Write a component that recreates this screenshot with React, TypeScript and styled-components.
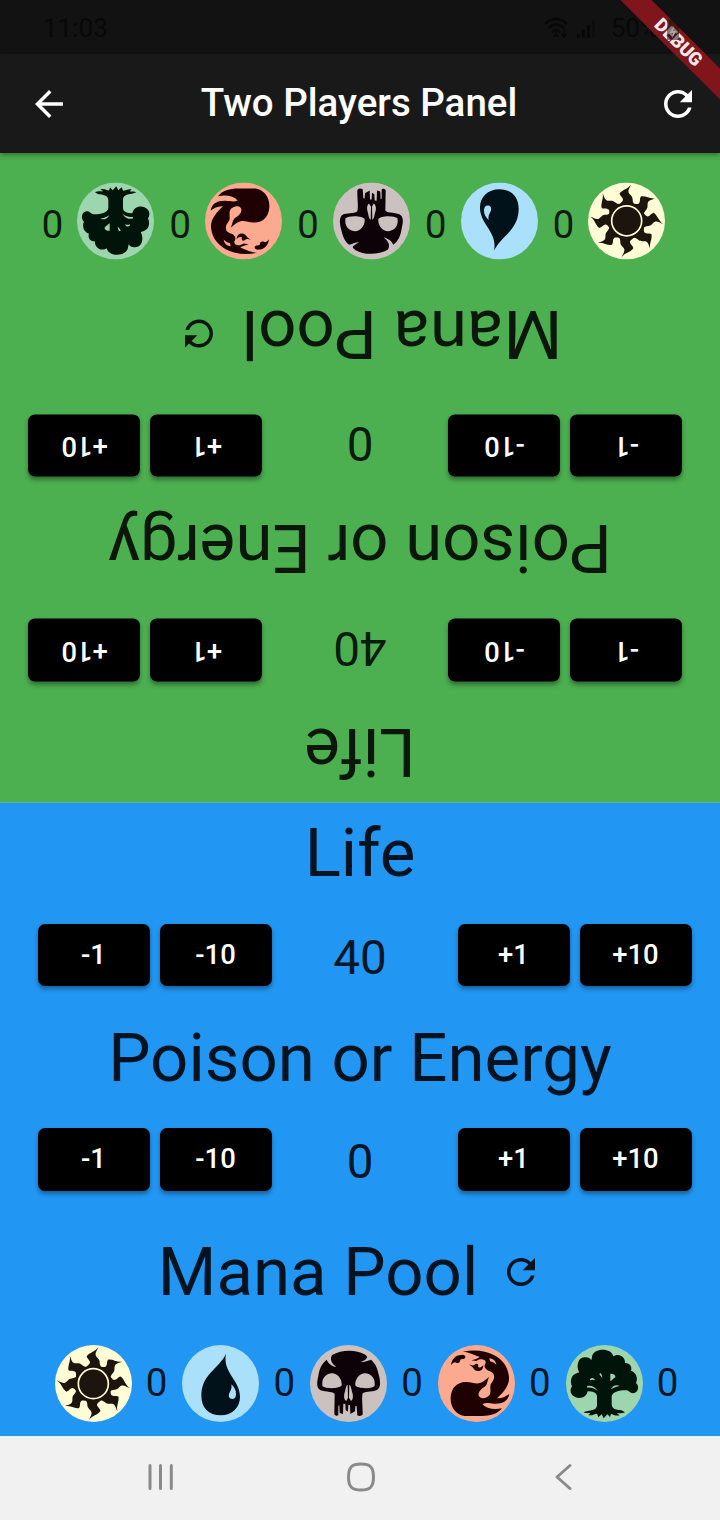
import React from 'react';
import styled, { createGlobalStyle } from 'styled-components';

const GlobalStyle = createGlobalStyle`
  html, body { margin: 0; padding: 0; }
  body { background: #f1f1f1; font-family: Roboto, sans-serif; }
  *, *::before, *::after { box-sizing: border-box; }
`;

const Screen = styled.main`
  position: relative;
  display: flex;
  flex-direction: column;
  width: 720px;
  height: 1520px;
  overflow: hidden;
  background: #62c0c8;
`;

const StatusBar = styled.div`
  display: flex;
  align-items: center;
  justify-content: space-between;
  height: 54px;
  padding: 2px 32px 0 43px;
  background: #121212;
  color: #080808;
  font-size: 26px;
  line-height: 30px;
`;

const StatusIcons = styled.div`
  display: flex;
  align-items: center;
  gap: 7px;
`;

const Charge = styled.span`
  margin-left: 5px;
`;

const AppBar = styled.header`
  position: relative;
  z-index: 1;
  display: flex;
  align-items: center;
  justify-content: space-between;
  height: 99px;
  padding: 1px 21px 0 28px;
  background: #191919;
  color: #fff;
  box-shadow: 0 2px 5px rgba(0, 0, 0, 0.35);
`;

const Title = styled.h1`
  margin: 0;
  padding: 0 9px 2px 0;
  font-size: 38.5px;
  font-weight: 500;
  line-height: 46px;
`;

const IconButton = styled.button`
  display: flex;
  padding: 0;
  border: 0;
  background: none;
  color: inherit;
`;

const Banner = styled.div`
  position: absolute;
  z-index: 2;
  top: 31px;
  left: 598px;
  width: 160px;
  height: 22px;
  padding-left: 1px;
  transform: rotate(45deg);
  background: #80161b;
  color: #f3e9e9;
  font-size: 18.5px;
  font-weight: 900;
  line-height: 22px;
  text-align: center;
`;

const BatteryMark = styled.svg`
  position: absolute;
  z-index: 3;
  top: 17px;
  left: 666px;
`;

const Panel = styled.section<{ $color: string; $flipped?: boolean }>`
  display: flex;
  flex-direction: column;
  height: ${(p) => (p.$flipped ? '649.5px' : '633.5px')};
  padding-top: 10px;
  background: ${(p) => p.$color};
  color: rgba(0, 0, 0, 0.87);
  transform: ${(p) => (p.$flipped ? 'rotate(180deg)' : 'none')};
`;

const Heading = styled.h2`
  display: flex;
  align-items: center;
  justify-content: center;
  margin: 0;
  padding-bottom: 1px;
  height: 82px;
  font-size: 67.2px;
  font-weight: 400;
  line-height: 82px;
  white-space: pre;
`;

const ManaHeading = styled(Heading)`
  gap: 22px;
  padding-right: 20px;
  margin-top: 9.5px;
`;

const CounterRow = styled.div`
  display: flex;
  align-items: center;
  height: 62.5px;
  margin: 29px 28px 31px 38px;
`;

const ButtonPair = styled.div`
  display: flex;
  gap: 10px;
`;

const StepButton = styled.button<{ $flipped?: boolean }>`
  width: 112px;
  height: 62.5px;
  padding: 0 1px 0 0;
  border: 0;
  border-radius: 7px;
  background: #000;
  color: #fff;
  font-family: inherit;
  font-size: 27.4px;
  font-weight: 500;
  line-height: 32px;
  box-shadow: 0 ${(p) => (p.$flipped ? '-3px' : '3px')} 4px rgba(0, 0, 0, 0.35);
`;

const Value = styled.span`
  flex: 1;
  padding: 6px 10px 0 0;
  font-size: 47.6px;
  line-height: 58px;
  text-align: center;
`;

const ManaRow = styled.div`
  display: flex;
  align-items: center;
  justify-content: space-between;
  margin-top: 32px;
  padding: 0 41.5px 0 54.5px;
`;

const ManaItem = styled.div`
  display: flex;
  align-items: center;
  gap: 14px;
`;

const ManaCount = styled.span`
  width: 22px;
  padding-bottom: 2px;
  font-size: 38.5px;
  line-height: 46px;
  text-align: center;
`;

const NavBar = styled.nav`
  display: flex;
  align-items: center;
  justify-content: space-between;
  height: 84px;
  padding: 0 147px 4px 147px;
  border-top: 1px solid #d6f6fb;
  background: #f1f1f1;
`;

const RefreshIcon = ({ size }: { size: number }) => (
  <svg width={size} height={size} viewBox="0 0 24 24" fill="currentColor">
    <path d="M17.65 6.35C16.2 4.9 14.21 4 12 4c-4.42 0-7.99 3.58-7.99 8s3.57 8 7.99 8c3.73 0 6.84-2.55 7.73-6h-2.08c-.82 2.33-3.04 4-5.65 4-3.31 0-6-2.69-6-6s2.69-6 6-6c1.66 0 3.14.69 4.22 1.78L13 11h7V4l-2.35 2.35z" />
  </svg>
);

const BackIcon = () => (
  <svg width="42" height="42" viewBox="0 0 24 24" fill="currentColor">
    <path d="M20 11H7.83l5.59-5.59L12 4l-8 8 8 8 1.41-1.41L7.83 13H20v-2z" />
  </svg>
);

const ray =
  'M-30 -42 C-24 -52 -11 -56 -10 -63 C-10 -71 -18 -73 -20 -82 C-12 -94 6 -95 15 -109 C11 -98 4 -92 8 -83 C12 -76 19 -74 19 -64 C19 -56 22 -50 28 -44 L0 -30 Z';

const SunSymbol = () => (
  <svg width="77" height="77" viewBox="45 30 231 231">
    <circle cx="160.5" cy="145.5" r="115.5" fill="#fffcd6" />
    <g transform="translate(160 146)" fill="#1c150d">
      <circle r="53" />
      {[0, 45, 89, 131, 179, 224, 267, 312].map((a) => (
        <path key={a} d={ray} transform={`rotate(${a})`} />
      ))}
      <circle r="45" stroke="#fffcd6" strokeWidth="5" />
    </g>
  </svg>
);

const DropSymbol = () => (
  <svg width="77" height="77" viewBox="426 30 231 231">
    <circle cx="541.5" cy="145.5" r="115.5" fill="#aae0fa" />
    <path
      fill="#01121b"
      d="M558 56 C548 78 529 94 511 114 C492 135 484 157 484 182 C484 218 506 241 542 241 C577 241 600 217 600 186 C600 164 591 148 578 128 C564 106 552 86 558 56 Z"
    />
    <path fill="#aae0fa" d="M574 148 C583 157 589 166 588 179 C587 188 583 192 577 192 C569 192 565 186 567 178 C569 170 577 163 574 148 Z" />
  </svg>
);

const SkullSymbol = () => (
  <svg width="77" height="77" viewBox="30 30 231 231">
    <circle cx="145.5" cy="145.5" r="115.5" fill="#cbc2bf" />
    <path
      fill="#0d0208"
      d="M96 60 C125 43 168 43 193 58 C199 62 205 67 199 71 C193 77 188 78 182 82 C195 82 204 76 213 74 C231 89 233 108 238 126 C242 145 241 158 232 164 C220 172 200 166 188 175 C184 190 189 220 188 238 C185 243 178 244 172 241 L170 214 L166 213 L165 229 L151 237 L150 210 L145 210 L144 230 L137 226 L136 207 L130 206 L129 237 L119 234 L118 211 L115 212 L115 240 C112 244 106 243 103 238 L104 177 C98 167 67 173 57 162 C49 154 51 139 55 123 C58 102 64 87 80 74 C84 85 96 94 109 96 C99 88 92 80 93 68 Z"
    />
    <g fill="#cbc2bf">
      <path d="M67 146 C66 127 81 114 98 115 C116 117 127 137 125 151 C121 161 78 163 67 153 Z" />
      <path d="M224 146 C225 127 210 114 193 115 C175 117 164 137 166 151 C170 161 213 163 224 153 Z" />
      <path d="M143 149 C137 151 137 165 133 176 C131 187 133 195 139 198 L144 188 Z" />
      <path d="M148 149 C154 151 154 165 158 176 C160 187 158 195 153 198 L147 188 Z" />
    </g>
  </svg>
);

const FireSymbol = () => (
  <svg width="77" height="77" viewBox="414 30 231 231">
    <circle cx="529.5" cy="145.5" r="115.5" fill="#fbaa8f" />
    <g fill="#200103">
      <path d="M488 50 C523 43 558 47 583 61 C608 75 622 94 626 119 C632 148 613 169 591 190 C606 191 618 184 628 177 C624 199 607 207 582 206 C568 205 558 202 547 207 C558 220 580 225 606 220 C593 237 570 243 546 243 L493 243 C467 239 450 215 452 187 C454 158 471 142 496 141 C512 139 526 149 540 144 C552 141 555 134 568 126 C560 139 564 148 554 155 C542 162 532 174 537 184 C545 194 562 189 569 179 C574 171 569 158 572 148 C576 140 584 135 582 122 C581 112 574 110 565 107 C557 103 550 96 556 86 C560 77 552 72 541 73 C535 74 532 77 529 78 L514 76 C528 72 535 70 539 65 C523 61 510 51 488 50 Z" />
      <path d="M453 91 C455 73 467 59 485 60 C493 58 497 64 496 68 C492 74 485 70 481 74 C480 84 474 86 468 83 C466 80 458 83 453 91 Z" />
      <path d="M507 88 C516 93 522 92 526 88 C532 84 537 89 534 96 C541 99 545 96 550 91 C550 103 542 110 533 108 C522 107 521 98 516 95 Z" />
    </g>
    <path fill="#fbaa8f" d="M568 70 C580 71 588 79 589 90 C584 84 577 80 570 79 Z" />
  </svg>
);

const TreeSymbol = () => (
  <svg width="77" height="77" viewBox="138 30 231 231">
    <circle cx="253.5" cy="145.5" r="115.5" fill="#9cd5ae" />
    <g fill="#00140a">
      <path d="M216 66 C219 39 273 36 280 64 C298 52 317 67 315 84 C331 85 337 96 333 107 C348 112 355 129 348 144 C358 152 356 170 343 174 C329 177 328 164 316 166 C297 166 277 171 275 184 L275 208 C276 224 292 225 305 226 L315 232 C305 237 296 233 290 235 L299 241 C286 244 280 238 273 237 L270 246 L262 238 L251 250 L245 238 L235 247 L231 236 C221 237 216 243 205 240 L211 235 C204 232 199 237 191 232 C207 224 231 229 231 210 L231 184 C230 172 217 169 203 169 C200 185 183 193 167 187 C151 181 148 165 156 154 C150 142 151 121 170 115 C174 113 180 115 176 109 C169 91 174 67 195 67 C204 66 210 70 214 76 Z" />
    </g>
    <g fill="#9cd5ae">
      <path d="M200 158 C212 156 226 160 234 169 C224 153 211 150 202 153 Z" />
      <path d="M210 132 C215 127 222 127 225 136 C219 134 215 134 210 136 Z" />
      <path d="M238 117 C241 112 246 116 247 129 C244 124 240 123 238 117 Z" />
      <path d="M271 116 C281 116 287 120 286 127 C280 131 276 136 271 139 Z" />
      <path d="M272 163 C278 152 289 147 299 153 C290 154 281 158 272 163 Z" />
    </g>
  </svg>
);

const symbols = [SunSymbol, DropSymbol, SkullSymbol, FireSymbol, TreeSymbol];

const Counter = ({ value, flipped }: { value: number; flipped?: boolean }) => (
  <CounterRow>
    <ButtonPair>
      <StepButton $flipped={flipped}>-1</StepButton>
      <StepButton $flipped={flipped}>-10</StepButton>
    </ButtonPair>
    <Value>{value}</Value>
    <ButtonPair>
      <StepButton $flipped={flipped}>+1</StepButton>
      <StepButton $flipped={flipped}>+10</StepButton>
    </ButtonPair>
  </CounterRow>
);

const PlayerPanel = ({ color, flipped }: { color: string; flipped?: boolean }) => (
  <Panel $color={color} $flipped={flipped}>
    <Heading>Life</Heading>
    <Counter value={40} flipped={flipped} />
    <Heading>Poison or Energy</Heading>
    <Counter value={0} flipped={flipped} />
    <ManaHeading>
      Mana Pool
      <IconButton aria-label="Reset mana">
        <RefreshIcon size={42} />
      </IconButton>
    </ManaHeading>
    <ManaRow>
      {symbols.map((Symbol, i) => (
        <ManaItem key={i}>
          <Symbol />
          <ManaCount>0</ManaCount>
        </ManaItem>
      ))}
    </ManaRow>
  </Panel>
);

export default function App() {
  return (
    <>
      <GlobalStyle />
      <Screen>
        <StatusBar>
          <span>11:03</span>
          <StatusIcons>
            <svg width="26" height="22" viewBox="0 0 26 22" fill="none" stroke="currentColor" strokeWidth="2.4">
              <path d="M1 7 Q12 -3 23 7 M4.500 11 Q12 4 19.500 11 M8 15 Q12 11.500 16 15" />
              <path d="M12 16 L14 19 L10 19 Z M20 12 V20 M17.500 17 L20 20 L22.500 17" strokeWidth="1.500" />
            </svg>
            <svg width="22" height="22" viewBox="0 0 22 22" fill="currentColor">
              <path d="M0 17h3v4h-3z M5 13h3v8h-3z M10 8h3v13h-3z" />
              <path d="M15 3h3v18h-3z" opacity="0.4" />
            </svg>
            <Charge>50%</Charge>
            <svg width="22" height="22" />
          </StatusIcons>
        </StatusBar>
        <AppBar>
          <IconButton aria-label="Back">
            <BackIcon />
          </IconButton>
          <Title>Two Players Panel</Title>
          <IconButton aria-label="Reset">
            <RefreshIcon size={42} />
          </IconButton>
        </AppBar>
        <PlayerPanel color="#4caf50" flipped />
        <PlayerPanel color="#2196f3" />
        <NavBar>
          <svg width="28" height="30" viewBox="0 0 28 30" stroke="#8a8a8a" strokeWidth="3" strokeLinecap="round">
            <path d="M3 3.500V26.500M13.500 3.500V26.500M24.300 3.500V26.500" />
          </svg>
          <svg width="32" height="32" viewBox="0 0 32 32" fill="none" stroke="#8a8a8a" strokeWidth="3">
            <path d="M16 3C25 3 28.500 6 28.500 16S25 29 16 29S3.500 26 3.500 16S7 3 16 3Z" />
          </svg>
          <svg width="26" height="30" viewBox="-6 0 26 30" fill="none" stroke="#8a8a8a" strokeWidth="3" strokeLinecap="round" strokeLinejoin="round">
            <path d="M17 3.500L4 15L17 26.500" />
          </svg>
        </NavBar>
        <Banner>DEBUG</Banner>
        <BatteryMark width="14" height="24" viewBox="0 0 14 24">
          <path d="M4 0h6v3h3v20h-12v-20h3z" fill="#111" opacity="0.5" />
          <path d="M8 9L3.500 16h3.500l-1 5 4.500-7h-3.500z" fill="#a9a9a9" />
        </BatteryMark>
      </Screen>
    </>
  );
}
